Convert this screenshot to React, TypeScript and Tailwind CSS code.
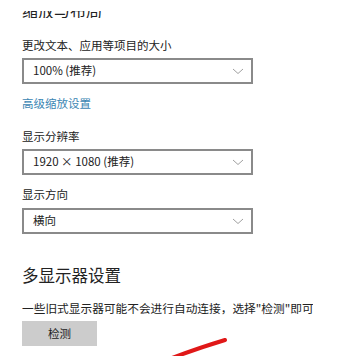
import React from "react";

const FONT = '"Noto Sans CJK SC", "Liberation Sans", sans-serif';

function Chevron() {
  return (
    <svg width="12" height="7" viewBox="0 0 12 7" className="shrink-0">
      <path d="M1 1 L6 5.5 L11 1" fill="none" stroke="#a0a0a0" strokeWidth="1" />
    </svg>
  );
}

function Select({ value, className = "" }: { value: string; className?: string }) {
  return (
    <div
      className={`flex h-[26px] w-[231px] items-center justify-between border-2 border-[#8a8a8a] bg-white pl-[9px] pr-[7px] text-[11.5px] text-[#222] ${className}`}
    >
      <span className="leading-none">{value}</span>
      <Chevron />
    </div>
  );
}

export default function App() {
  return (
    <div
      className="relative h-[356px] w-[340px] overflow-hidden bg-white pl-[22px] text-[#222]"
      style={{ fontFamily: FONT }}
    >
      <div className="mt-[11px] h-[7px] overflow-hidden">
        <div className="-mt-[9px] text-[16px] leading-[16px] whitespace-nowrap">缩放与布局</div>
      </div>

      <div className="mt-[19px] text-[11.5px] leading-[16px] whitespace-nowrap">
        更改文本、应用等项目的大小
      </div>
      <Select value="100% (推荐)" className="mt-[5px] h-[25px]" />

      <div className="mt-[11px] text-[11.5px] leading-[16px] text-[#3b86b3]">高级缩放设置</div>

      <div className="mt-[17px] text-[11.5px] leading-[16px]">显示分辨率</div>
      <Select value="1920 × 1080 (推荐)" className="mt-[5px]" />

      <div className="mt-[11px] text-[11.5px] leading-[16px]">显示方向</div>
      <Select value="横向" className="mt-[6px]" />

      <div className="mt-[29px] text-[16.5px] leading-[24px]">多显示器设置</div>

      <div className="mt-[13px] w-[291px] overflow-hidden text-[11.7px] leading-[16px] whitespace-nowrap">
        一些旧式显示器可能不会进行自动连接，选择"检测"即可尝试连接它们。
      </div>

      <button className="mt-[5px] flex h-[25px] w-[75px] items-center justify-center bg-[#cccccc] text-[11.5px] text-[#222]">
        检测
      </button>

      <svg
        className="pointer-events-none absolute left-0 top-0"
        width="340"
        height="356"
        viewBox="0 0 340 356"
      >
        <path
          d="M172 358 C188 352 205 346 225 340"
          fill="none"
          stroke="#e01818"
          strokeWidth="4"
          strokeLinecap="round"
        />
      </svg>
    </div>
  );
}
